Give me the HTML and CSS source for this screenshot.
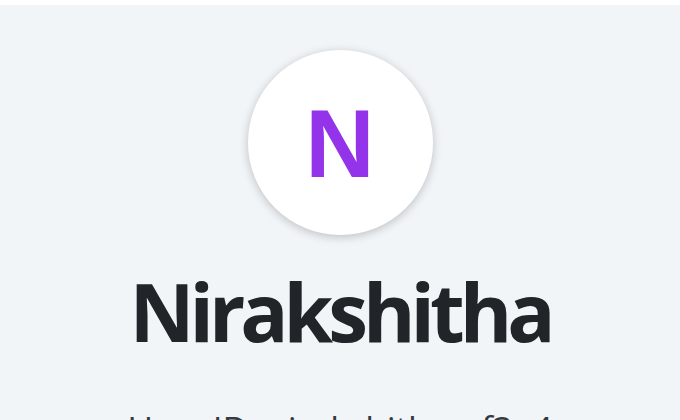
FILE: index.html
```html
<!DOCTYPE html>
<html>
<head>
<meta charset="utf-8">
<link rel="stylesheet" href="styles.css">
</head>
<body>
<main class="profile">
  <div class="avatar"><span class="initial">N</span></div>
  <h1 class="name">Nirakshitha</h1>
  <p class="userid">User ID: nirakshitha_cf3e4</p>
</main>
</body>
</html>
```
FILE: styles.css
```css
html, body {
  margin: 0;
  padding: 0;
  background: #ffffff;
  height: 100%;
  overflow: hidden;
}
.profile {
  margin-top: 5px;
  min-height: 600px;
  background: #f2f5f8;
  display: flex;
  flex-direction: column;
  align-items: center;
  padding-top: 45px;
  font-family: "Open Sans", sans-serif;
  color: #212529;
}
.avatar {
  width: 185px;
  height: 185px;
  border-radius: 50%;
  background: #ffffff;
  box-shadow: 0 2px 10px rgba(0, 0, 0, 0.22);
  display: flex;
  align-items: center;
  justify-content: center;
}
.initial {
  font-family: "Liberation Sans", Arial, sans-serif;
  font-size: 96px;
  font-weight: 700;
  line-height: 1;
  padding-top: 3px;
  color: #9333ea;
}
.name {
  margin: 28px 0 0;
  font-size: 80px;
  font-weight: 700;
  line-height: 1.2;
  letter-spacing: -5px;
}
.userid {
  margin: 49px 0 0;
  font-size: 35px;
  line-height: 1.2;
  color: #343a40;
}
```
